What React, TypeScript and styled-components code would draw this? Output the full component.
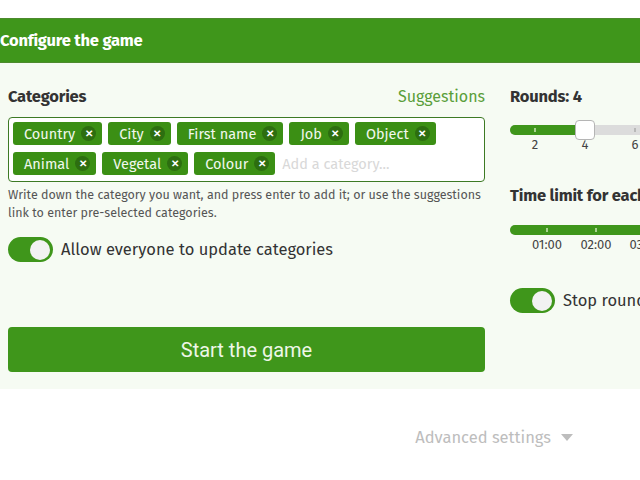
import React from 'react';
import styled, { createGlobalStyle } from 'styled-components';

const GlobalStyle = createGlobalStyle`
  body {
    margin: 0;
    background: #ffffff;
    font-family: "Fira Sans", "Noto Sans", "Open Sans", sans-serif;
    color: #333333;
    overflow: hidden;
  }
`;

const Page = styled.div`
  width: 640px;
  height: 480px;
  padding-top: 18px;
  box-sizing: border-box;
  overflow: hidden;
`;

const Header = styled.div`
  height: 45px;
  box-sizing: border-box;
  background: #3f961b;
  border-top: 1px solid #4d8a2e;
  border-bottom: 1px solid #4d8a2e;
  display: flex;
  align-items: center;
  color: #ffffff;
  font-weight: 700;
  font-size: 16.5px;
  letter-spacing: -0.2px;
`;

const Body = styled.div`
  background: #f6fbf3;
  display: grid;
  grid-template-columns: 477px 300px;
  column-gap: 25px;
  padding: 0 0 17px 8px;
`;

const Column = styled.div`
  display: flex;
  flex-direction: column;
`;

const TitleRow = styled.div<{ $top: number }>`
  display: flex;
  justify-content: space-between;
  align-items: center;
  height: 22px;
  margin-top: ${p => p.$top}px;
`;

const Title = styled.div`
  font-weight: 700;
  font-size: 16.5px;
  color: #333333;
  letter-spacing: -0.2px;
  white-space: nowrap;
`;

const Link = styled.a`
  font-size: 16px;
  color: #5a9e3a;
`;

const TagBox = styled.div`
  margin-top: 10px;
  background: #ffffff;
  border: 1px solid #3d7a24;
  border-radius: 4px;
  padding: 4px 4px 6px 4px;
  display: flex;
  flex-wrap: wrap;
  gap: 7px 6px;
  align-items: center;
`;

const Tag = styled.div`
  height: 23px;
  background: #3b8f14;
  border-radius: 3px;
  display: flex;
  align-items: center;
  gap: 6px;
  padding: 0 6px 0 11px;
  color: #f2f8ee;
  font-size: 14.5px;
`;

const Remove = styled.span`
  width: 15px;
  height: 15px;
  border-radius: 50%;
  background: #2d6e10;
  color: #ffffff;
  font-size: 10px;
  font-weight: 700;
  display: flex;
  align-items: center;
  justify-content: center;
`;

const Placeholder = styled.span`
  font-size: 14.5px;
  color: #d8d8d8;
  margin-left: 1px;
`;

const Help = styled.p`
  margin: 4px 0 0 0;
  font-size: 12.5px;
  line-height: 18px;
  color: #555555;
`;

const SwitchRow = styled.div<{ $top: number }>`
  display: flex;
  align-items: center;
  gap: 8px;
  margin-top: ${p => p.$top}px;
  font-size: 16.5px;
  color: #333333;
  white-space: nowrap;
`;

const Switch = styled.div`
  width: 45px;
  height: 25px;
  border-radius: 13px;
  background: #3f961b;
  display: flex;
  align-items: center;
  justify-content: flex-end;
  padding: 0 3px;
  box-sizing: border-box;
  flex-shrink: 0;
`;

const Knob = styled.div`
  width: 20px;
  height: 20px;
  border-radius: 50%;
  background: #f2f2f2;
`;

const StartButton = styled.button`
  margin-top: 65px;
  height: 45px;
  border: none;
  border-radius: 4px;
  background: #3f961b;
  color: #eef7e8;
  font-family: Roboto, sans-serif;
  font-size: 20px;
`;

const Slider = styled.div<{ $top: number }>`
  position: relative;
  margin-top: ${p => p.$top}px;
  height: 10px;
  width: 300px;
  border-radius: 5px;
  background: #dcdcdc;
`;

const Fill = styled.div`
  position: absolute;
  left: 0;
  top: 0;
  bottom: 0;
  border-radius: 5px;
  background: #3f961b;
`;

const Tick = styled.div<{ $on: boolean }>`
  position: absolute;
  top: 3px;
  width: 2px;
  height: 4px;
  margin-left: -1px;
  background: ${p => (p.$on ? '#a9d490' : '#b8b8b8')};
`;

const Handle = styled.div`
  position: absolute;
  top: -5px;
  width: 20px;
  height: 20px;
  margin-left: -10px;
  box-sizing: border-box;
  background: #ffffff;
  border: 1px solid #b5b5b5;
  border-radius: 4px;
`;

const Labels = styled.div`
  position: relative;
  height: 20px;
  margin-top: 2px;
  font-size: 13px;
  color: #444444;
`;

const Label = styled.span`
  position: absolute;
  top: 0;
  transform: translateX(-50%);
`;

const Footer = styled.div`
  display: flex;
  justify-content: flex-end;
  align-items: center;
  gap: 10px;
  padding: 39px 67px 0 0;
  font-size: 16.5px;
  color: #bdbdbd;
`;

const Caret = styled.span`
  width: 0;
  height: 0;
  border-left: 6px solid transparent;
  border-right: 6px solid transparent;
  border-top: 7px solid #bdbdbd;
`;

const tags = ['Country', 'City', 'First name', 'Job', 'Object', 'Animal', 'Vegetal', 'Colour'];

const RangeSlider: React.FC<{ top: number; ticks: number[]; labels: string[]; value?: number }> = ({ top, ticks, labels, value }) => (
  <>
    <Slider $top={top}>
      <Fill style={{ width: value !== undefined ? value : '100%' }} />
      {ticks.map(t => (
        <Tick key={t} $on={value === undefined || t < value} style={{ left: t }} />
      ))}
      {value !== undefined && <Handle style={{ left: value }} />}
    </Slider>
    <Labels>
      {ticks.map((t, i) => (
        <Label key={t} style={{ left: t }}>{labels[i]}</Label>
      ))}
    </Labels>
  </>
);

export default function App() {
  return (
    <Page>
      <GlobalStyle />
      <Header>Configure the game</Header>
      <Body>
        <Column>
          <TitleRow $top={22}>
            <Title>Categories</Title>
            <Link>Suggestions</Link>
          </TitleRow>
          <TagBox>
            {tags.map(t => (
              <Tag key={t}>
                {t}
                <Remove>✕</Remove>
              </Tag>
            ))}
            <Placeholder>Add a category...</Placeholder>
          </TagBox>
          <Help>
            Write down the category you want, and press enter to add it; or use the suggestions link to enter pre-selected categories.
          </Help>
          <SwitchRow $top={15}>
            <Switch><Knob /></Switch>
            Allow everyone to update categories
          </SwitchRow>
          <StartButton>Start the game</StartButton>
        </Column>
        <Column>
          <TitleRow $top={22}>
            <Title>Rounds: 4</Title>
          </TitleRow>
          <RangeSlider top={18} ticks={[25, 75, 125, 175]} labels={['2', '4', '6', '8']} value={75} />
          <TitleRow $top={27}>
            <Title>Time limit for each round</Title>
          </TitleRow>
          <RangeSlider top={19} ticks={[37, 86, 135, 184]} labels={['01:00', '02:00', '03:00', '04:00']} />
          <SwitchRow $top={31}>
            <Switch><Knob /></Switch>
            Stop round when someone has finished
          </SwitchRow>
        </Column>
      </Body>
      <Footer>
        Advanced settings
        <Caret />
      </Footer>
    </Page>
  );
}
